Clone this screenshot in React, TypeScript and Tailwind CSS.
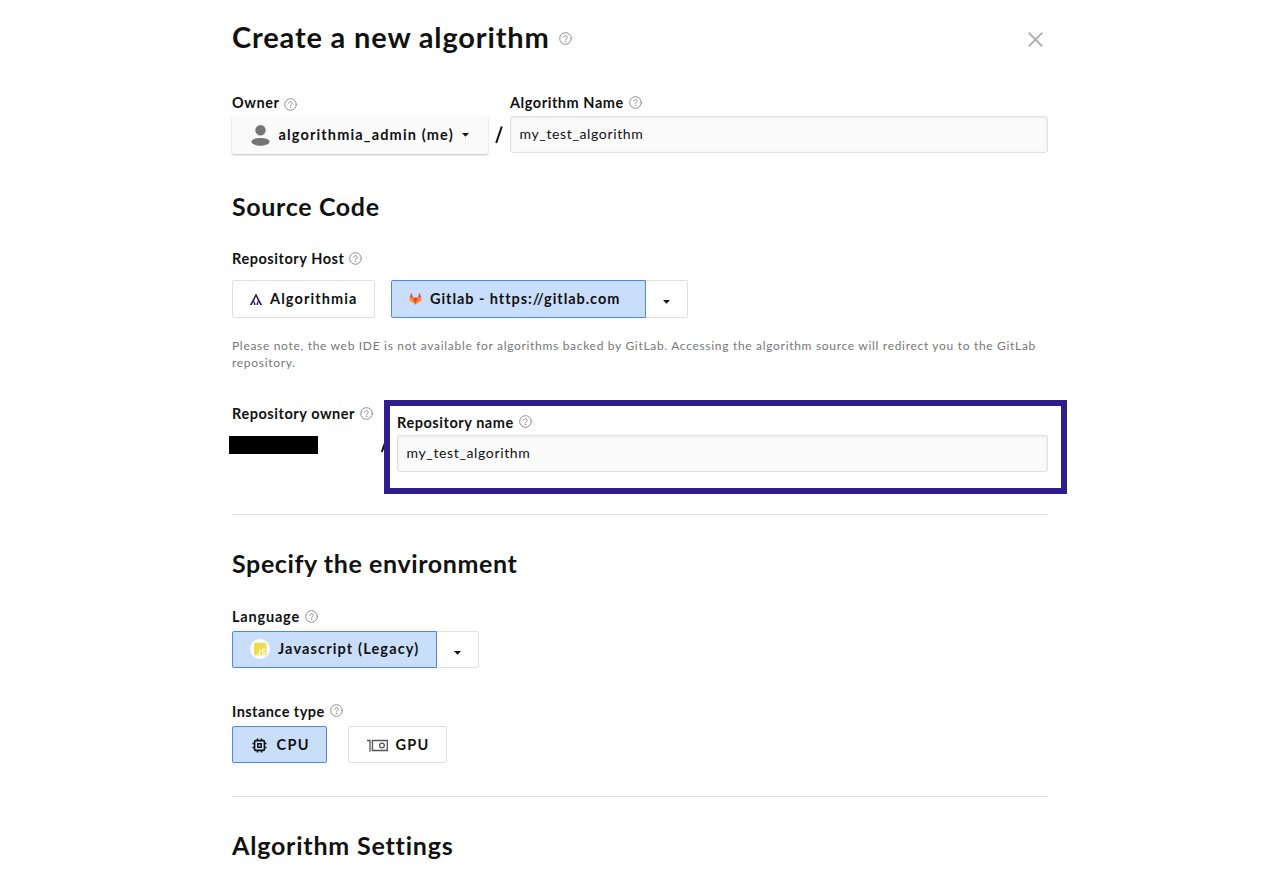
import type { ReactNode } from "react";
import clsx from "clsx";

function Help({ className }: { className?: string }) {
  return (
    <svg className={clsx("h-[13px] w-[13px] shrink-0", className)} viewBox="0 0 13 13" fill="none" stroke="#8c8c8c" strokeLinecap="round">
      <circle cx="6.5" cy="6.5" r="5.8" strokeWidth="1" />
      <path d="M4.8 5.2a1.7 1.7 0 1 1 2.6 1.5c-.6.35-.9.6-.9 1.2" strokeWidth="1" />
      <circle cx="6.5" cy="9.6" r=".3" strokeWidth=".6" fill="#8c8c8c" />
    </svg>
  );
}

function Heading({ children, className }: { children: ReactNode; className?: string }) {
  return <h2 className={clsx("h-8 text-[25px] leading-8 font-bold text-[#111]", className)}>{children}</h2>;
}

function Label({ children, text, className }: { children?: ReactNode; text: string; className?: string }) {
  return (
    <div className="flex h-5 items-center gap-[5px] text-[14.5px] leading-5 font-bold tracking-[0.55px]">
      <span className={className}>{text}</span>
      {children ?? <Help className="relative -top-px" />}
    </div>
  );
}

function Field() {
  return (
    <div className="flex h-[37px] w-full items-center rounded-[3px] border border-[#e0e0e0] bg-[#fafafa] pl-[8.5px] text-[14px] font-normal tracking-[0.64px] shadow-[inset_0_1px_3px_rgba(0,0,0,0.06)]">
      <span className="relative -top-px">my_test_algorithm</span>
    </div>
  );
}

function Caret() {
  return (
    <svg className="h-[4px] w-[7px] shrink-0" viewBox="0 0 7 4">
      <path d="M0 0.1h7L3.5 3.8z" fill="#111" />
    </svg>
  );
}

const button = "flex h-[37.5px] items-center border text-[14.5px] font-bold";
const selected = "border-[#4f86ec] bg-[#c9defa]";

function GitlabLogo() {
  return (
    <svg className="h-3 w-[13px] shrink-0" viewBox="0 0 26 24">
      <path d="M13 23.5 18 9H8z" fill="#e24329" />
      <path d="M13 23.5 8 9H1.5z" fill="#fc6d26" />
      <path d="M1.5 9 .2 13.4c-.2.6 0 1.2.5 1.5L13 23.5z" fill="#fca326" />
      <path d="M1.5 9H8L5.2.9c-.2-.5-.8-.5-1 0z" fill="#e24329" />
      <path d="M13 23.5 18 9h6.5z" fill="#fc6d26" />
      <path d="m24.5 9 1.3 4.4c.2.6 0 1.2-.5 1.5L13 23.5z" fill="#fca326" />
      <path d="M24.5 9H18L20.8.9c.2-.5.8-.5 1 0z" fill="#e24329" />
    </svg>
  );
}

function AlgorithmiaLogo() {
  return (
    <svg className="h-[11px] w-3 shrink-0" viewBox="0 0 12 11" fill="none" stroke="#2b1760" strokeLinejoin="round">
      <path d="M1.2 10.3 6 1l4.8 9.3" strokeWidth="1.6" />
      <path d="M3.4 6.5 4.9 10.3M8.6 6.5 7.1 10.3" strokeWidth="1.2" />
      <path d="M.2 10.4h1.8M3.9 10.4h1.5M6.6 10.4h1.5M10 10.4h1.8M5.2 1.1h1.6" strokeWidth="1.2" />
    </svg>
  );
}

function CpuIcon() {
  return (
    <svg className="h-[15px] w-[15px] shrink-0" viewBox="0 0 15 15" fill="none" stroke="#111">
      <rect x="2.6" y="2.6" width="9.8" height="9.8" rx="1" strokeWidth="1.6" />
      <rect x="5.8" y="5.8" width="3.4" height="3.4" strokeWidth="1.5" />
      <path d="M5.5 2.5V.5M9.5 2.5V.5M5.5 14.5v-2M9.5 14.5v-2M2.5 5.5h-2M2.5 9.5h-2M14.5 5.5h-2M14.5 9.5h-2" strokeWidth="1.6" />
    </svg>
  );
}

function GpuIcon() {
  return (
    <svg className="h-[13px] w-[21px] shrink-0" viewBox="0 0 21 13" fill="none" stroke="#555" strokeWidth="1.3">
      <path d="M0 1.5h3v11.3M5.5 1.5h14.8v10H5.5z" />
      <circle cx="14.9" cy="6.5" r="2.4" />
      <path d="M3.2 3.2h2.3M3.2 9.7h2.3" stroke="#999" />
    </svg>
  );
}

export default function App() {
  return (
    <main className="h-[884px] overflow-hidden bg-white font-['Lato',sans-serif] text-[#111] [font-variant-ligatures:none]">
      <div className="mx-auto w-[816px]">
        <header className="flex h-[93px] items-start justify-between pt-[17px]">
          <div className="flex h-10 items-center gap-[9px]">
            <h1 className="text-[29px] leading-10 font-bold tracking-[0.84px]">Create a new algorithm</h1>
            <Help className="relative top-[1px]" />
          </div>
          <svg className="mt-[15px] mr-[5px] h-[15px] w-[15px]" viewBox="0 0 15 15" stroke="#aaa" strokeWidth="1.8" strokeLinecap="round">
            <path d="m1.2 1.2 12.6 12.6M13.8 1.2 1.2 13.8" />
          </svg>
        </header>

        <div className="flex">
          <div className="w-[256px]">
            <Label text="Owner"><Help className="relative top-px" /></Label>
            <div className="mt-[3px] flex h-[38px] items-center rounded-[2px] bg-[#fafafa] pl-[18.5px] text-[14.5px] font-bold tracking-[1.15px] shadow-[0_1px_2px_rgba(0,0,0,0.25)]">
              <svg className="h-[21px] w-[19px]" viewBox="0 0 19 21" fill="#757575">
                <circle cx="9.5" cy="5.3" r="5.2" />
                <path d="M.4 16.7c0-2.3 4.6-3.6 9.1-3.6s9.1 1.3 9.1 3.6-4.6 4-9.1 4-9.1-1.7-9.1-4z" />
              </svg>
              <span className="ml-[9px] mr-2">algorithmia_admin (me)</span>
              <Caret />
            </div>
          </div>
          <div className="flex w-[22px] justify-center pt-[33px]">
            <svg className="h-[18px] w-[8px]" viewBox="0 0 8 18" stroke="#111" strokeWidth="2"><path d="M6.8.5 1.2 17" /></svg>
          </div>
          <div className="flex-1">
            <Label text="Algorithm Name" />
            <div className="mt-[3px]"><Field /></div>
          </div>
        </div>

        <Heading className="mt-[36px] tracking-[0.65px]">Source Code</Heading>
        <div className="mt-[27px]"><Label text="Repository Host" /></div>
        <div className="mt-[11px] flex">
          <div className={clsx(button, "w-[143px] rounded-[2px] border-[#e0e0e0] pt-px pl-[17px] tracking-[1.1px]")}>
            <AlgorithmiaLogo />
            <span className="ml-2">Algorithmia</span>
          </div>
          <div className={clsx(button, selected, "ml-4 w-[255px] rounded-l-[2px] pl-[17px] tracking-[0.95px]")}>
            <GitlabLogo />
            <span className="ml-2">Gitlab - https://gitlab.com</span>
          </div>
          <div className={clsx(button, "w-[41.5px] justify-center rounded-r-[2px] border-l-0 border-[#e0e0e0] pt-[7px]")}><Caret /></div>
        </div>
        <p className="mt-[19.5px] h-[34px] text-[12px] leading-[17px] tracking-[0.69px] text-[#777]">
          Please note, the web IDE is not available for algorithms backed by GitLab. Accessing the algorithm source will redirect you to the GitLab<br />repository.
        </p>

        <div className="mt-[29px] -mr-[19px] flex h-[94px]">
          <div className="w-[149px] pt-1">
            <Label text="Repository owner" />
            <div className="mt-[11.5px] -ml-[3px] h-[18.5px] w-[89px] bg-black" />
          </div>
          <div className="flex w-[3px] overflow-hidden pt-[37px]">
            <svg className="h-[18px] w-2 shrink-0" viewBox="0 0 8 18" stroke="#111" strokeWidth="2"><path d="M6.8-2 .8 15" /></svg>
          </div>
          <div className="flex-1 border-[6px] border-[#2f1f8c] pt-[6.5px] pr-[13px] pl-[7px]">
            <Label text="Repository name" />
            <div className="mt-[2.5px]"><Field /></div>
          </div>
        </div>
        <div className="mt-[20px] h-px bg-[#dedede]" />

        <Heading className="mt-[32px] tracking-[0.6px]">Specify the environment</Heading>
        <div className="mt-[28px]"><Label text="Language" className="tracking-[0.8px]" /></div>
        <div className="mt-[3.5px] flex">
          <div className={clsx(button, selected, "w-[205px] rounded-l-[2px] pl-[17px] tracking-[1.14px]")}>
            <svg className="h-5 w-5 shrink-0" viewBox="0 0 20 20">
              <circle cx="10" cy="10" r="10" fill="#fff" />
              <path d="M4 3.8h12.5v12.5H4z" fill="#f0db4f" />
              <path d="M9.9 10.2v4c0 .8-.4 1.2-1.1 1.2-.6 0-1-.3-1.2-.8M14.9 10.9c-.3-.5-.7-.7-1.3-.7-1.7 0-1.8 1.9-.3 2.4 2.1.6 2 2.8.2 2.8-.8 0-1.3-.3-1.7-.9" fill="none" stroke="#fff" strokeWidth="1.2" />
            </svg>
            <span className="ml-2">Javascript (Legacy)</span>
          </div>
          <div className={clsx(button, "w-[41.5px] justify-center rounded-r-[2px] border-l-0 border-[#e0e0e0] pt-[7px]")}><Caret /></div>
        </div>

        <div className="mt-[33.5px]"><Label text="Instance type" className="tracking-[0.45px]" /></div>
        <div className="mt-[4px] flex gap-[21px]">
          <div className={clsx(button, selected, "w-[95px] rounded-[2px] pt-[2px] pl-[18.5px] tracking-[1.3px]")}>
            <CpuIcon />
            <span className="ml-[10px]">CPU</span>
          </div>
          <div className={clsx(button, "w-[99px] rounded-[2px] border-[#e0e0e0] pt-[2px] pl-[17.5px] tracking-[1.3px]")}>
            <GpuIcon />
            <span className="ml-[8px]">GPU</span>
          </div>
        </div>
        <div className="mt-[32.5px] h-px bg-[#dedede]" />
        <Heading className="mt-[32.5px] tracking-[0.8px]">Algorithm Settings</Heading>
      </div>
    </main>
  );
}
